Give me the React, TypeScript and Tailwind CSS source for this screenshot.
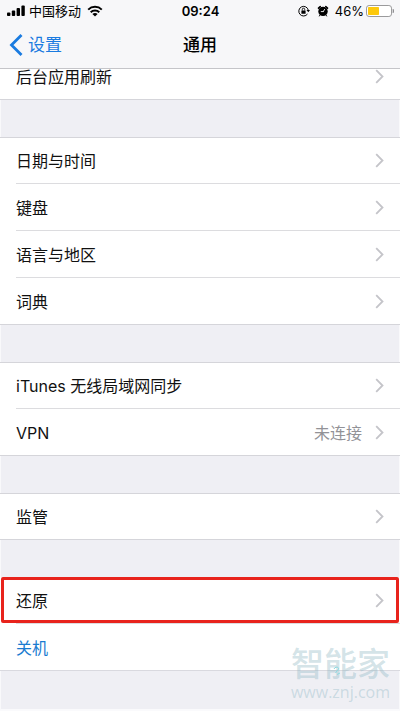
import React from 'react';

interface RowItem {
  label: string;
  value?: string;
  action?: boolean;
  highlighted?: boolean;
}

const groups: RowItem[][] = [
  [{ label: '后台应用刷新' }],
  [{ label: '日期与时间' }, { label: '键盘' }, { label: '语言与地区' }, { label: '词典' }],
  [{ label: 'iTunes 无线局域网同步' }, { label: 'VPN', value: '未连接' }],
  [{ label: '监管' }],
  [{ label: '还原', highlighted: true }, { label: '关机', action: true }],
];

const SignalIcon = () => (
  <svg className="w-[18px] h-3" viewBox="0 0 18 12" fill="currentColor" aria-hidden="true">
    <rect x="0" y="7.5" width="3.4" height="3.5" rx="0.9" />
    <rect x="4.8" y="5.5" width="3.4" height="5.5" rx="0.9" />
    <rect x="9.6" y="3" width="3.4" height="8" rx="0.9" />
    <rect x="14.4" y="0.5" width="3.4" height="10.5" rx="0.9" />
  </svg>
);

const WifiIcon = () => (
  <svg className="w-4 h-3" viewBox="0 0 16 12" aria-hidden="true">
    <g fill="none" stroke="currentColor" strokeWidth="2">
      <path d="M1.2 4.6C5 0.9 11 0.9 14.8 4.6" />
      <path d="M3.7 7.2C6.1 4.9 9.9 4.9 12.3 7.2" />
    </g>
    <path fill="currentColor" d="M5.4 8.9C6.9 7.6 9.1 7.6 10.6 8.9L8 11.5Z" />
  </svg>
);

const RotationLockIcon = () => (
  <svg className="w-3 h-3" viewBox="0 0 12 12" aria-hidden="true">
    <path d="M9.5 9A4.8 4.8 0 1 1 10.3 5.2" fill="none" stroke="currentColor" strokeWidth="1" />
    <path d="M8.5 5.1H12L10.3 7.3Z" fill="currentColor" />
    <rect x="3.4" y="5.4" width="4.2" height="3.4" rx="0.5" fill="currentColor" />
    <path d="M4.3 5.5V4.4a1.2 1.2 0 0 1 2.4 0V5.5" fill="none" stroke="currentColor" strokeWidth="0.9" />
  </svg>
);

const AlarmIcon = () => (
  <svg className="w-3 h-3" viewBox="0 0 12 12" aria-hidden="true">
    <circle cx="6" cy="6.4" r="4.7" fill="currentColor" />
    <path d="M1.5 3.1L3.2 1.6M10.5 3.1L8.8 1.6" stroke="currentColor" strokeWidth="1.6" strokeLinecap="round" />
    <path d="M3 10L2.4 11M9 10L9.6 11" stroke="currentColor" strokeWidth="1" strokeLinecap="round" />
    <path d="M6.2 6.6L7.6 4.4M6.2 6.6H4.2" fill="none" stroke="#f7f7f9" strokeWidth="0.9" strokeLinecap="round" />
  </svg>
);

const BatteryIcon = () => (
  <svg className="w-7 h-3" viewBox="0 0 28 12" aria-hidden="true">
    <rect x="0.5" y="0.5" width="25" height="11" rx="2.6" fill="#fff" stroke="#9a9a9c" />
    <rect x="2" y="2" width="11" height="8" rx="0.8" fill="#fdc90c" />
    <path d="M27 4.2C28 4.7 28 7.3 27 7.8Z" fill="#858588" stroke="#858588" strokeWidth="0.6" />
  </svg>
);

const Chevron = () => (
  <svg className="w-[9px] h-[15px] shrink-0" viewBox="0 0 9 15" fill="none" aria-hidden="true">
    <path d="M1.2 1.2L7.5 7.5L1.2 13.8" stroke="#c4c4c9" strokeWidth="1.8" />
  </svg>
);

const Row: React.FC<{ item: RowItem; last: boolean }> = ({ item, last }) => (
  <li className="relative h-[47px] pl-4">
    <button
      type="button"
      className={`w-full h-full flex items-center pr-4 text-left border-b ${last ? 'border-transparent' : 'border-[#dcdcdf]'}`}
    >
      <span className={`flex-1 pt-px ${item.action ? 'text-[#1a7bd0]' : 'text-[#111]'}`}>{item.label}</span>
      {item.value && <span className="mr-[13px] pt-px text-[#929297]">{item.value}</span>}
      {!item.action && <Chevron />}
    </button>
    {item.highlighted && (
      <span className="absolute inset-x-px top-0 h-[46px] border-3 border-[#e8231c] rounded-xs pointer-events-none" />
    )}
  </li>
);

const App: React.FC = () => (
  <div className="relative min-h-screen flex flex-col bg-[#efeff4] border-x border-b-2 border-x-[#f9f9fb] border-b-[#fafafc] font-['Inter','Noto_Sans_CJK_SC',sans-serif] text-base">
    <header className="relative z-10 -mx-px h-[69px] bg-[#f7f7f9] border-b border-[#c5c5c9] text-black">
      <div className="h-[22px] grid grid-cols-[1fr_auto_1fr] items-center pl-[7px] pr-[6px] text-[13px] leading-5">
        <div className="flex items-center gap-1">
          <SignalIcon />
          <span>中国移动</span>
          <span className="ml-0.5"><WifiIcon /></span>
        </div>
        <time className="font-semibold text-[13px]">09:24</time>
        <div className="flex items-center justify-end">
          <RotationLockIcon />
          <span className="ml-[7px]"><AlarmIcon /></span>
          <span className="ml-[6px] mr-[2px]">46%</span>
          <BatteryIcon />
        </div>
      </div>
      <nav className="h-[46px] grid grid-cols-[1fr_auto_1fr] items-center px-[9px]">
        <a href="#settings" className="flex items-center gap-[5px] text-[17px] text-[#1a7be0]">
          <svg className="w-[14px] h-[22px]" viewBox="0 0 14 22" fill="none" aria-hidden="true">
            <path d="M12.5 1L2.5 11L12.5 21" stroke="currentColor" strokeWidth="2.8" />
          </svg>
          <span className="pt-0.5">设置</span>
        </a>
        <h1 className="pt-0.5 text-[17px] font-medium">通用</h1>
      </nav>
    </header>

    <main className="-mx-px -mt-4 flex flex-col gap-[37px]">
      {groups.map((group) => (
        <ul key={group[0].label} className="relative bg-white">
          {group.map((item, i) => (
            <Row key={item.label} item={item} last={i === group.length - 1} />
          ))}
          {!group[0].highlighted && (
            <li role="presentation" className="absolute inset-0 border-y border-[#d5d5da] pointer-events-none" />
          )}
          {group[0].highlighted && (
            <li role="presentation" className="absolute inset-x-0 bottom-0 border-b border-[#d9d9df] pointer-events-none" />
          )}
        </ul>
      ))}
    </main>

    <div className="absolute right-[9px] bottom-[7px] flex flex-col items-center text-[#8fb8c4]/40 pointer-events-none">
      <span className="relative text-[33px] leading-9 font-medium">
        智能家
        <svg className="absolute left-[42px] top-5 w-2 h-2.5" viewBox="0 0 8 10" fill="none" aria-hidden="true">
          <path d="M1 3C2 0.5 6 0.5 5.5 3L2.5 7M4 8.5L7 7" stroke="#8adbe2" strokeWidth="1" />
        </svg>
      </span>
      <span className="font-['Open_Sans',sans-serif] text-base leading-5">www.znj.com</span>
    </div>
  </div>
);

export default App;
